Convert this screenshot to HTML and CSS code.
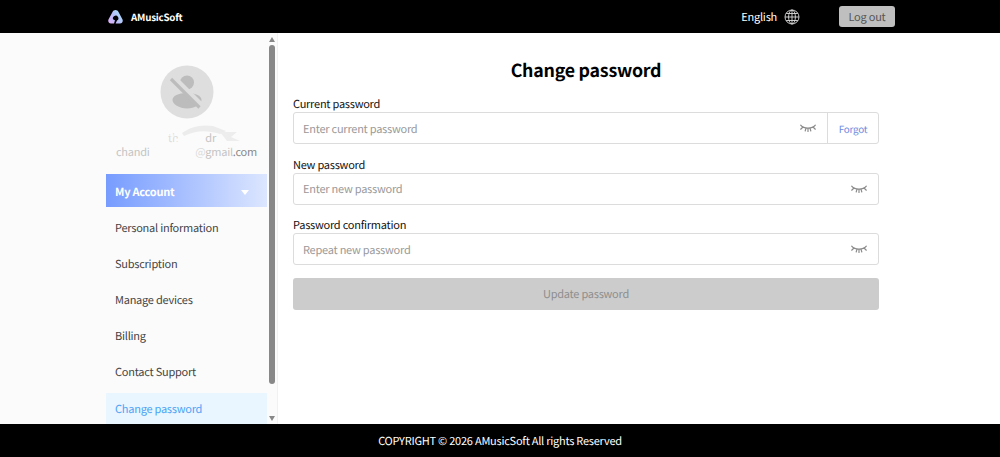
FILE: index.html
```html
<!DOCTYPE html>
<html lang="en">
  <head>
    <meta charset="UTF-8" />
    <meta name="viewport" content="width=device-width, initial-scale=1.0" />
    <title>Change password - AMusicSoft</title>
    <link rel="stylesheet" href="styles.css">
  </head>
  <body>
    <header class="header">
      <a class="brand">
        <svg class="logo" viewBox="0 0 15 14">
          <defs>
            <linearGradient id="logo-fill" x1="0" y1="1" x2="1" y2="0.3">
              <stop offset="0" stop-color="#e0b0f8" />
              <stop offset="0.5" stop-color="#b9bdf8" />
              <stop offset="1" stop-color="#a3e0fb" />
            </linearGradient>
          </defs>
          <path fill="url(#logo-fill)" d="M7.5 0C8.8 0 9.8.7 10.5 1.9L14.4 9.2C15.4 11.6 14.2 13.5 12 13.5H7.6L9 10.6A2.7 2.7 0 1 0 5.3 9.6L7 10.2 6 13.5H3C.8 13.5-.4 11.6.6 9.2L4.5 1.9C5.2.7 6.2 0 7.5 0Z" />
        </svg>
        <span>AMusicSoft</span>
      </a>
      <div class="header-right">
        <span class="language">English</span>
        <svg class="globe" viewBox="0 0 16 16">
          <circle cx="8" cy="8" r="7" />
          <ellipse cx="8" cy="8" rx="3.4" ry="7" />
          <path d="M8 1V15M1 8H15M2.2 4.5H13.8M2.2 11.5H13.8" />
        </svg>
        <button class="logout">Log out</button>
      </div>
    </header>

    <main class="main">
      <aside class="sidebar">
        <div class="sidebar-content">
          <svg class="avatar" viewBox="0 0 54 54">
            <circle cx="27" cy="27" r="26.5" fill="#dedede" />
            <circle cx="27" cy="17.5" r="7" fill="#bcbcbc" />
            <path d="M12.5 35C12.5 31 18 28 27 28S41.5 31 41.5 35C41.5 39 35 43.5 27 43.5S12.5 39 12.5 35Z" fill="#bcbcbc" />
            <path d="M13 11.5L42 40.5" stroke="#dedede" stroke-width="5" />
            <path d="M11 14L39.5 42.5" stroke="#bcbcbc" stroke-width="3.2" />
          </svg>
          <div class="user">
            <div class="user-name"><span class="faint">th</span><span class="soft">dr</span></div>
            <div class="user-mail"><span class="soft">chandi</span><span><i class="faint">@</i><i class="soft">gmail</i>.com</span></div>
            <svg class="smudge" viewBox="0 0 150 36">
              <path d="M66 8C74 2 85-1 97 1L110 6 104 9C91 5 80 5 68 11Z" fill="#ececec" />
              <path d="M104 7L121 7 115 12 124 16 111 16Z" fill="#ededed" />
              <path d="M52 10L60 9 57 13ZM9 22L40 20 43 22 10 24ZM92 21L126 22 125 24 112 23 94 24Z" fill="#fbfbfb" opacity="0.7" />
              <path d="M58 15L67 11 63 17Z" fill="#fbfbfb" />
            </svg>
          </div>
          <nav class="menu">
            <div class="menu-title">My Account <span class="caret"></span></div>
            <a>Personal information</a>
            <a>Subscription</a>
            <a>Manage devices</a>
            <a>Billing</a>
            <a>Contact Support</a>
            <a class="active">Change password</a>
          </nav>
        </div>
        <div class="scrollbar">
          <span class="arrow-up"></span>
          <span class="thumb"></span>
          <span class="arrow-down"></span>
        </div>
      </aside>

      <section class="content">
        <h1>Change password</h1>
        <form class="password-form">
          <label for="current">Current password</label>
          <div class="field">
            <input type="password" id="current" placeholder="Enter current password" />
            <svg class="eye" viewBox="0 0 16 8"><path d="M.7 1.2C4 5.2 12 5.2 15.3 1.2M3 3L.7 5.2M6 4.2L5.2 7M8 4.4V7.6M10 4.2L10.8 7M13 3L15.3 5.2" /></svg>
            <a class="forgot">Forgot</a>
          </div>
          <label for="new">New password</label>
          <div class="field">
            <input type="password" id="new" placeholder="Enter new password" />
            <svg class="eye" viewBox="0 0 16 8"><path d="M.7 1.2C4 5.2 12 5.2 15.3 1.2M3 3L.7 5.2M6 4.2L5.2 7M8 4.4V7.6M10 4.2L10.8 7M13 3L15.3 5.2" /></svg>
          </div>
          <label for="confirm">Password confirmation</label>
          <div class="field">
            <input type="password" id="confirm" placeholder="Repeat new password" />
            <svg class="eye" viewBox="0 0 16 8"><path d="M.7 1.2C4 5.2 12 5.2 15.3 1.2M3 3L.7 5.2M6 4.2L5.2 7M8 4.4V7.6M10 4.2L10.8 7M13 3L15.3 5.2" /></svg>
          </div>
          <button class="update" type="button" disabled>Update password</button>
        </form>
      </section>
    </main>

    <footer class="footer">COPYRIGHT © 2026 AMusicSoft All rights Reserved</footer>
  </body>
</html>
```
FILE: styles.css
```css
* {
  box-sizing: border-box;
}
body {
  margin: 0;
  height: 100vh;
  display: flex;
  flex-direction: column;
  overflow: hidden;
  font-family: "Noto Sans CJK SC", "Noto Sans", sans-serif;
  font-size: 11px;
  letter-spacing: -0.24px;
  text-rendering: geometricPrecision;
  color: #111;
  background: #fff;
}
button, input {
  font-family: inherit;
  letter-spacing: inherit;
  text-rendering: inherit;
}
.header {
  height: 33px;
  flex-shrink: 0;
  padding: 0 105px 0 108px;
  display: flex;
  align-items: center;
  justify-content: space-between;
  background: #000;
  color: #fff;
}
.brand {
  display: flex;
  align-items: center;
  gap: 8px;
  font-size: 9.8px;
  font-weight: 700;
}
.logo {
  width: 15px;
  height: 14px;
}
.header-right {
  display: flex;
  align-items: center;
}
.language {
  font-size: 11px;
}
.globe {
  width: 16px;
  height: 16px;
  margin: 0 39px 0 7px;
  fill: none;
  stroke: #ddd;
  stroke-width: 0.9;
}
.logout {
  width: 56px;
  height: 21px;
  padding: 0;
  border: none;
  border-radius: 3px;
  background: #bfbfbf;
  color: #555;
  font-size: 11px;
  line-height: 22px;
}
.main {
  flex: 1;
  min-height: 0;
  display: flex;
}
.sidebar {
  width: 278px;
  padding-left: 106px;
  display: flex;
  background: #fbfbfb;
  border-right: 1px solid #f1f1f1;
  overflow: hidden;
}
.sidebar-content {
  width: 161px;
  padding-top: 32px;
  display: flex;
  flex-direction: column;
  align-items: center;
}
.avatar {
  width: 54px;
  height: 54px;
  flex-shrink: 0;
}
.user {
  position: relative;
  width: 141px;
  height: 55px;
  flex-shrink: 0;
  padding-top: 12px;
  line-height: 14px;
  color: #888;
}
.user-name {
  display: flex;
  gap: 27px;
  padding-left: 52px;
}
.user-mail {
  display: flex;
  justify-content: space-between;
}
.user i {
  font-style: normal;
}
.faint {
  color: #dcdcdc;
}
.soft {
  color: #c4c4c4;
}
.smudge {
  position: absolute;
  left: 0;
  top: 6px;
  width: 150px;
  height: 36px;
}
.menu {
  width: 161px;
  display: flex;
  flex-direction: column;
  gap: 3.2px;
}
.menu-title, .menu a {
  height: 33px;
  flex-shrink: 0;
  padding: 0 18px 0 9px;
  line-height: 32px;
  color: #444;
}
.menu .menu-title {
  display: flex;
  align-items: center;
  justify-content: space-between;
  margin-bottom: 1.5px;
  padding-top: 3px;
  background: linear-gradient(90deg, #779cff, #dce6ff);
  color: #fff;
  font-weight: 700;
}
.caret {
  border: 4px solid transparent;
  border-top: 5px solid #fff;
  border-bottom: none;
}
.menu .active {
  background: #e9f5ff;
  color: #4ba3f5;
}
.scrollbar {
  width: 10px;
  padding: 4px 0 3px;
  display: flex;
  flex-direction: column;
  align-items: center;
  gap: 3px;
}
.arrow-up, .arrow-down {
  border: 3.5px solid transparent;
}
.arrow-up {
  border-top: none;
  border-bottom: 5px solid #888;
}
.arrow-down {
  margin-top: auto;
  border-bottom: none;
  border-top: 5px solid #888;
}
.thumb {
  width: 6px;
  height: 339px;
  border-radius: 3px;
  background: #888;
}
.content {
  width: 586px;
  margin-left: 15px;
}
.content h1 {
  margin: 23px 0 0;
  font-size: 17.8px;
  line-height: 28px;
  text-align: center;
  color: #000;
}
.password-form {
  padding-top: 12px;
  display: flex;
  flex-direction: column;
}
.password-form label {
  height: 16px;
  line-height: 16px;
}
.field {
  height: 32px;
  margin-bottom: 12.5px;
  display: flex;
  align-items: center;
  border: 1px solid #dcdcdc;
  border-radius: 3px;
}
.field input {
  flex: 1;
  min-width: 0;
  padding: 1px 9px 0;
  border: none;
  outline: none;
  background: none;
  font-size: 11px;
}
.field input::placeholder {
  color: #999;
}
.eye {
  width: 16px;
  height: 8px;
  margin-right: 11px;
  fill: none;
  stroke: #8c8c8c;
  stroke-width: 1.2;
  stroke-linecap: round;
}
.forgot {
  width: 51px;
  height: 30px;
  border-left: 1px solid #dcdcdc;
  text-align: center;
  font-size: 9.9px;
  line-height: 32px;
  color: #6b8ade;
}
.update {
  height: 32px;
  padding-top: 2px;
  border: none;
  border-radius: 3px;
  background: #ccc;
  color: #8e8e8e;
  font-size: 11px;
}
.footer {
  height: 33px;
  flex-shrink: 0;
  background: #000;
  color: #fff;
  text-align: center;
  line-height: 34px;
}
```
